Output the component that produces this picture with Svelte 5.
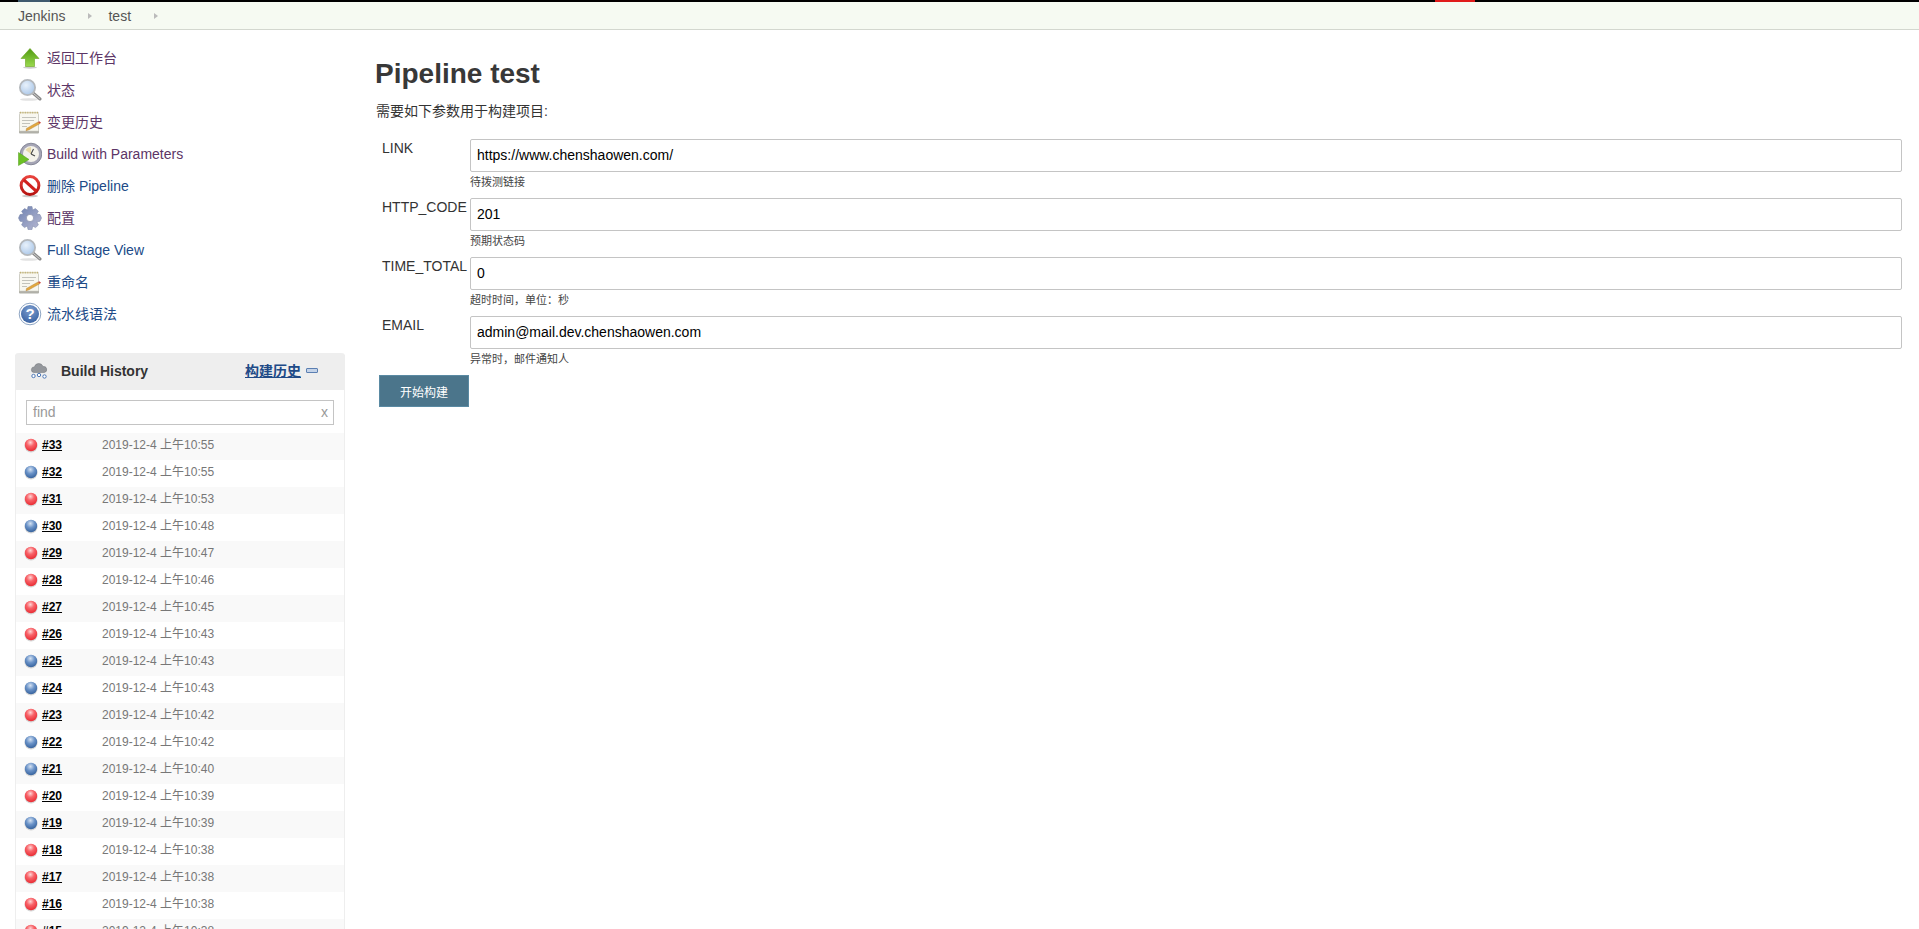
<script>
  const links = [
    { icon: 'up', label: '返回工作台', visited: true },
    { icon: 'search', label: '状态', visited: true },
    { icon: 'notepad', label: '变更历史', visited: true },
    { icon: 'clock', label: 'Build with Parameters', visited: true },
    { icon: 'stop', label: '删除 Pipeline', visited: false },
    { icon: 'gear', label: '配置', visited: true },
    { icon: 'search', label: 'Full Stage View', visited: false },
    { icon: 'notepad', label: '重命名', visited: false },
    { icon: 'help', label: '流水线语法', visited: false }
  ];

  const params = [
    { name: 'LINK', value: 'https://www.chenshaowen.com/', desc: '待拨测链接' },
    { name: 'HTTP_CODE', value: '201', desc: '预期状态码' },
    { name: 'TIME_TOTAL', value: '0', desc: '超时时间，单位：秒' },
    { name: 'EMAIL', value: 'admin@mail.dev.chenshaowen.com', desc: '异常时，邮件通知人' }
  ];

  // r = failed, b = success
  const builds = [
    [33, 'r', '10:55'], [32, 'b', '10:55'], [31, 'r', '10:53'], [30, 'b', '10:48'],
    [29, 'r', '10:47'], [28, 'r', '10:46'], [27, 'r', '10:45'], [26, 'r', '10:43'],
    [25, 'b', '10:43'], [24, 'b', '10:43'], [23, 'r', '10:42'], [22, 'b', '10:42'],
    [21, 'b', '10:40'], [20, 'r', '10:39'], [19, 'b', '10:39'], [18, 'r', '10:38'],
    [17, 'r', '10:38'], [16, 'r', '10:38'], [15, 'r', '10:38']
  ];
</script>

{#snippet icon(name)}
  <svg class="task-icon" viewBox="0 0 24 24" width="24" height="24">
    {#if name === 'up'}
      <ellipse cx="12" cy="21.5" rx="7" ry="1.2" fill="#ccc" />
      <path d="M12 2.5 21 12.5H16.5V20.5H7.5V12.5H3Z" fill="url(#g-up)" stroke="#6aa31e" stroke-width=".6" />
    {:else if name === 'search'}
      <ellipse cx="11" cy="21.5" rx="9" ry="1.3" fill="#e2e2e2" />
      <path d="M15 15 22 21" stroke="#8a8a8a" stroke-width="3" stroke-linecap="round" />
      <path d="M15.5 15.5 21.5 20.6" stroke="#d0d0d0" stroke-width="1" stroke-linecap="round" />
      <circle cx="9.5" cy="9.5" r="7.6" fill="url(#g-glass)" stroke="#b4b8bc" stroke-width="1.8" />
    {:else if name === 'notepad'}
      <rect x="1" y="4" width="20" height="19.5" rx="1" fill="#b0b0a8" />
      <rect x="1.5" y="2.5" width="19" height="18.5" fill="#f8f7f0" stroke="#c9c8be" stroke-width=".5" />
      <path d="M2 2.6H20" stroke="#c2b273" stroke-width="1.8" stroke-dasharray="1 .7" />
      <path d="M4 7.5H18M4 10.5H16M4 13.5H12M4 16.5H9" stroke="#bcbcb6" stroke-width=".9" />
      <path d="M8.5 18.4 20 12 22 13.6 11 19.8 8 20.8Z" fill="#e3a83f" stroke="#a8752a" stroke-width=".4" />
      <path d="M20 12 22 13.6 23 12.8 21.2 11.3Z" fill="#c9453b" />
    {:else if name === 'clock'}
      <circle cx="13" cy="12" r="10.8" fill="#a5a5b5" stroke="#777a8c" stroke-width=".8" />
      <circle cx="13" cy="12" r="8" fill="#f4f2ea" />
      <path d="M13 12V5A7 7 0 0 0 7.5 8Z" fill="#e7d9a8" />
      <path d="M13 12 15.5 7M13 12 17 14" stroke="#444" stroke-width="1.1" />
      <path d="M0.5 10.5 11 17.5 0.5 23.5Z" fill="#6cc024" stroke="#4e9b18" stroke-width=".5" />
    {:else if name === 'stop'}
      <ellipse cx="12" cy="22" rx="8" ry="1.3" fill="#ccc" />
      <circle cx="12" cy="11.5" r="8.9" fill="#fff" stroke="url(#g-stop)" stroke-width="3" />
      <path d="M5.8 5.8 18.2 17.2" stroke="#d0201e" stroke-width="3.1" />
    {:else if name === 'gear'}
      <path d="M10 0.5H14L14.7 4 17.4 2.5 20.4 5.2 18.7 8 22 8.6 23.5 12 22 15.2 18.9 15.8 20.4 19 17.5 21.6 14.7 20 14 23.5H10L9.3 20 6.5 21.6 3.6 19 5.1 15.8 2 15.2 .5 12 2 8.6 5.3 8 3.6 5.2 6.6 2.5 9.3 4Z" fill="url(#g-gear)" stroke="#7580a5" stroke-width=".5" />
      <circle cx="12" cy="12" r="3.6" fill="#fff" stroke="#7d84a0" stroke-width=".6" />
    {:else if name === 'help'}
      <circle cx="12" cy="12" r="10.8" fill="#fff" stroke="#8fa6c4" stroke-width="1" />
      <circle cx="12" cy="12" r="9" fill="url(#g-help)" />
      <text x="12" y="17" text-anchor="middle" class="help-mark">?</text>
    {/if}
  </svg>
{/snippet}

<svg class="defs" width="0" height="0" aria-hidden="true">
  <defs>
    <linearGradient id="g-up" x1="0" y1="0" x2="0" y2="1">
      <stop offset="0" stop-color="#4f9a0f" /><stop offset="1" stop-color="#9ad94f" />
    </linearGradient>
    <radialGradient id="g-glass" cx=".4" cy=".35" r=".7">
      <stop offset="0" stop-color="#e8f1fb" /><stop offset="1" stop-color="#a9c6e8" />
    </radialGradient>
    <linearGradient id="g-stop" x1="0" y1="0" x2="0" y2="1">
      <stop offset="0" stop-color="#e8423c" /><stop offset="1" stop-color="#b81412" />
    </linearGradient>
    <linearGradient id="g-gear" x1="0" y1="0" x2="1" y2="1">
      <stop offset="0" stop-color="#6f82b2" /><stop offset="1" stop-color="#b8b9d2" />
    </linearGradient>
    <radialGradient id="g-help" cx=".5" cy=".3" r=".8">
      <stop offset="0" stop-color="#7f9fd0" /><stop offset="1" stop-color="#2f5a9c" />
    </radialGradient>
    <radialGradient id="ball-r" cx=".45" cy=".3" r=".75">
      <stop offset="0" stop-color="#ffd6d6" /><stop offset=".4" stop-color="#f8646a" /><stop offset="1" stop-color="#e8242c" />
    </radialGradient>
    <radialGradient id="ball-b" cx=".45" cy=".3" r=".75">
      <stop offset="0" stop-color="#d5e2f2" /><stop offset=".45" stop-color="#6b93c8" /><stop offset="1" stop-color="#2f5c98" />
    </radialGradient>
  </defs>
</svg>

<div class="page">
  <div class="tabstrip">
    <span class="strip-a"></span>
    <span class="strip-b"></span>
  </div>

  <nav class="breadcrumbs">
    <span>Jenkins</span><i class="caret"></i>
    <span>test</span><i class="caret"></i>
  </nav>

  <div class="body">
    <aside class="side">
      <ul class="tasks">
        {#each links as l}
          <li class:visited={l.visited}>
            {@render icon(l.icon)}
            <span>{l.label}</span>
          </li>
        {/each}
      </ul>

      <section class="pane">
        <header class="pane-head">
          <svg class="cloud" viewBox="0 0 18 18" width="18" height="18">
            <path d="M4 10.5a2.8 2.8 0 0 1 .4-5.6 4.5 4.5 0 0 1 8.6-.4 3 3 0 0 1 1.3 6Z" fill="#94979c" stroke="#6f7277" stroke-width=".5" />
            <circle cx="3.5" cy="14" r="1.7" fill="#fff" stroke="#3f6db0" stroke-width=".9" />
            <circle cx="9" cy="13" r="1.7" fill="#fff" stroke="#3f6db0" stroke-width=".9" />
            <circle cx="14.5" cy="14.5" r="1.7" fill="#fff" stroke="#3f6db0" stroke-width=".9" />
          </svg>
          <strong>Build History</strong>
          <a class="trend" href="#trend">构建历史</a>
          <span class="collapse"></span>
        </header>
        <div class="filter">
          <div class="find">
            <span>find</span>
            <span class="clear">x</span>
          </div>
        </div>
        {#each builds as b, i}
          <div class="build" class:odd={i % 2 === 0}>
            <svg class="ball" viewBox="0 0 16 16" width="16" height="16">
              <ellipse cx="8" cy="8.8" rx="6.6" ry="6.6" fill="#bbb" opacity=".6" />
              <circle cx="8" cy="8" r="6.2" fill="url(#ball-{b[1]})" />
            </svg>
            <a class="num" href="#b{b[0]}">#{b[0]}</a>
            <span class="when">2019-12-4 上午{b[2]}</span>
          </div>
        {/each}
      </section>
    </aside>

    <main class="main">
      <h1>Pipeline test</h1>
      <p class="intro">需要如下参数用于构建项目:</p>
      <div class="params">
        {#each params as p}
          <div class="param">
            <label for={p.name}>{p.name}</label>
            <input id={p.name} type="text" value={p.value} />
            <div class="desc">{p.desc}</div>
          </div>
        {/each}
      </div>
      <button class="submit" type="button">开始构建</button>
    </main>
  </div>
</div>

<style>
  :global(body) {
    background: #fff;
    overflow: hidden;
  }

  .defs {
    position: absolute;
  }

  .page {
    height: 929px;
    overflow: hidden;
    color: #333;
    font-family: "Liberation Sans", "Noto Sans CJK SC", sans-serif;
    font-size: 14px;
  }

  .tabstrip {
    height: 2px;
    background: #000;
    display: flex;
  }
  .strip-a {
    width: 32px;
    margin-left: 18px;
    background: #3f5a6e;
  }
  .strip-b {
    width: 40px;
    margin-left: 1385px;
    background: #e01b1b;
  }

  .breadcrumbs {
    height: 28px;
    box-sizing: border-box;
    background: #f6faf2;
    border-bottom: 1px solid #d3d7cf;
    padding-left: 18px;
    display: flex;
    align-items: center;
    font-size: 14px;
    color: #555;
  }
  .caret {
    width: 0;
    height: 0;
    margin: 0 16px 0 23px;
    border-left: 4px solid #bbb;
    border-top: 3.5px solid transparent;
    border-bottom: 3.5px solid transparent;
  }

  .body {
    display: flex;
  }

  .side {
    width: 346px;
    flex: none;
    padding-left: 15px;
    box-sizing: border-box;
  }

  .tasks {
    list-style: none;
    margin: 0;
    padding: 12px 0 0 3px;
  }
  .tasks li {
    height: 32px;
    display: flex;
    align-items: center;
    gap: 5px;
    color: #204a87;
    font-size: 14px;
    line-height: 16px;
  }
  .tasks li.visited {
    color: #5c3566;
  }
  .task-icon {
    flex: none;
  }
  .help-mark {
    font: bold 15px "Liberation Sans", sans-serif;
    fill: #fff;
  }

  .pane {
    margin-top: 23px;
    border: 1px solid #eee;
    border-top: 0;
    border-radius: 4px 4px 0 0;
    width: 330px;
    box-sizing: border-box;
  }
  .pane-head {
    height: 37px;
    box-sizing: border-box;
    background: #eee;
    border-radius: 4px 4px 0 0;
    display: flex;
    align-items: center;
    padding: 0 0 2px 15px;
    margin: 0 -1px;
    font-size: 14px;
    line-height: 16px;
  }
  .pane-head strong {
    margin-left: 13px;
    width: 184px;
  }
  .trend {
    color: #204a87;
    font-weight: bold;
    font-size: 14px;
  }
  .collapse {
    width: 12px;
    height: 5px;
    margin-left: 5px;
    border: 1px solid #5b7fb2;
    background: #c4d3e8;
    box-sizing: border-box;
    border-radius: 1px;
  }

  .filter {
    padding: 10px 10px 8px;
  }
  .find {
    height: 25px;
    box-sizing: border-box;
    border: 1px solid #c4c4c4;
    display: flex;
    justify-content: space-between;
    align-items: center;
    padding: 0 5px 2px 6px;
    color: #999;
    font-size: 14px;
  }

  .build {
    height: 27px;
    box-sizing: border-box;
    padding: 0 0 3px 7px;
    display: flex;
    align-items: center;
    font-size: 12px;
    line-height: 14px;
  }
  .build.odd {
    background: #f9f9f9;
  }
  .ball {
    flex: none;
  }
  .num {
    margin-left: 3px;
    width: 60px;
    color: #000;
    font-weight: bold;
  }
  .when {
    color: #777;
  }

  .main {
    flex: 1;
    padding: 0 17px 0 30px;
    min-width: 0;
  }
  h1 {
    margin: 28px 0 0 -1px;
    font-size: 28px;
    line-height: 32px;
    font-weight: bold;
    color: #383838;
  }
  .intro {
    margin: 12px 0 0;
    font-size: 14px;
    line-height: 18px;
  }

  .params {
    margin-top: 19px;
    padding-left: 6px;
  }
  .param {
    display: grid;
    grid-template-columns: 88px 1fr;
    align-content: start;
    height: 59px;
  }
  .param label {
    padding-top: 1px;
    font-size: 14px;
    line-height: 16px;
  }
  .param input {
    height: 33px;
    box-sizing: border-box;
    border: 1px solid #c4c4c4;
    border-radius: 2px;
    padding: 0 6px 1px;
    margin: 0;
    font: 14px "Liberation Sans", sans-serif;
    color: #000;
    min-width: 0;
  }
  .desc {
    grid-column: 2;
    font-size: 11px;
    line-height: 14px;
    margin-top: 3px;
    color: #444;
  }

  .submit {
    display: block;
    margin: 0 0 0 3px;
    width: 90px;
    height: 32px;
    border: 1px solid #5a8aa3;
    background: #4b758b;
    color: #fff;
    font: 12px "Liberation Sans", "Noto Sans CJK SC", sans-serif;
    padding: 0;
  }
</style>
